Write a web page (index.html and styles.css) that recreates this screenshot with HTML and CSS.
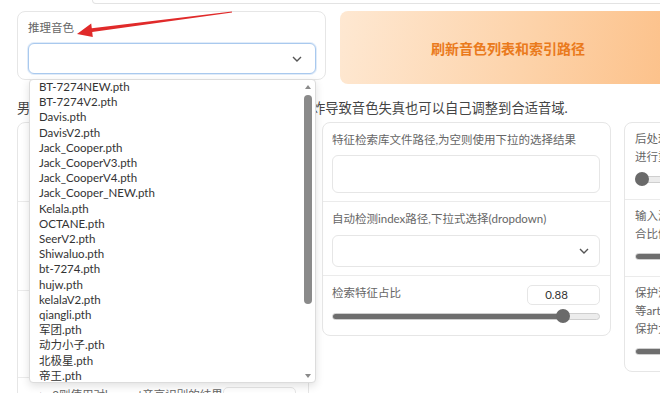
FILE: index.html
```html
<!DOCTYPE html>
<html lang="zh">

<head>
  <meta charset="UTF-8">
  <meta name="viewport" content="width=device-width, initial-scale=1.0">
  <title>模型推理</title>
  <link rel="stylesheet" href="styles.css">
</head>

<body>
  <div class="page">
    <div class="top-strip"></div>

    <div class="top-row">
      <div class="card voice-card">
        <div class="label">推理音色</div>
        <div class="select focused">
          <svg class="chev" width="10" height="6" viewBox="0 0 10 6"><polyline points="1,1 5,5 9,1" /></svg>
        </div>
      </div>
      <button class="refresh-btn">刷新音色列表和索引路径</button>
    </div>

    <p class="info">男转女推荐+12key, 女转男推荐-12key, 如果音域爆炸导致音色失真也可以自己调整到合适音域.</p>

    <div class="columns">
      <!-- left column -->
      <div class="card col-left">
        <div class="block">
          <div class="label">变调(整数, 半音数量, 升八度12降八度-12)</div>
          <div class="textbox"></div>
        </div>
        <div class="block">
          <div class="label">输入待处理音频文件路径(默认是正确格式示例)</div>
          <div class="textbox tall"></div>
        </div>
        <div class="block">
          <div class="label">选择音高提取算法,输入歌声可用pm提速,harvest低音好但巨慢无比,crepe效果好但吃GPU</div>
          <div class="radios">
            <span class="radio">pm</span>
            <span class="radio">harvest</span>
            <span class="radio">crepe</span>
            <span class="radio">rmvpe</span>
          </div>
        </div>
        <div class="block nested">
          <div class="head">
            <div class="label">&gt;=3则使用对harvest音高识别的结果使用中值滤波</div>
            <div class="num">3</div>
          </div>
        </div>
      </div>

      <!-- middle column -->
      <div class="card col-mid">
        <div class="block">
          <div class="label">特征检索库文件路径,为空则使用下拉的选择结果</div>
          <div class="textbox"></div>
        </div>
        <div class="block">
          <div class="label">自动检测index路径,下拉式选择(dropdown)</div>
          <div class="select">
            <svg class="chev" width="10" height="6" viewBox="0 0 10 6"><polyline points="1,1 5,5 9,1" /></svg>
          </div>
        </div>
        <div class="block">
          <div class="head">
            <div class="label">检索特征占比</div>
            <div class="num">0.88</div>
          </div>
          <div class="slider">
            <div class="track"><div class="fill" style="width: calc(7px + 0.88 * (100% - 14px))"></div></div>
            <div class="thumb" style="left: calc(0.88 * (100% - 14px))"></div>
          </div>
        </div>
      </div>

      <!-- right column -->
      <div class="card col-right">
        <div class="block">
          <div class="label">后处理重采样至最终采样率，0为不进行重采样</div>
          <div class="slider">
            <div class="track"><div class="fill" style="width: 7px"></div></div>
            <div class="thumb" style="left: 0"></div>
          </div>
        </div>
        <div class="block">
          <div class="label">输入源音量包络替换输出音量包络融合比例，越靠近1越使用输出包络</div>
          <div class="slider">
            <div class="track"><div class="fill" style="width: calc(7px + 1 * (100% - 14px))"></div></div>
            <div class="thumb" style="left: calc(1 * (100% - 14px))"></div>
          </div>
        </div>
        <div class="block">
          <div class="label">保护清辅音和呼吸声，防止电音撕裂等artifact，拉满0.5不开启，调低加大保护力度但可能降低索引效果</div>
          <div class="slider">
            <div class="track"><div class="fill" style="width: calc(7px + 0.66 * (100% - 14px))"></div></div>
            <div class="thumb" style="left: calc(0.66 * (100% - 14px))"></div>
          </div>
        </div>
      </div>
    </div>

    <!-- open dropdown of 推理音色 -->
    <div class="dropdown">
      <ul class="options">
        <li>BT-7274NEW.pth</li>
        <li>BT-7274V2.pth</li>
        <li>Davis.pth</li>
        <li>DavisV2.pth</li>
        <li>Jack_Cooper.pth</li>
        <li>Jack_CooperV3.pth</li>
        <li>Jack_CooperV4.pth</li>
        <li>Jack_Cooper_NEW.pth</li>
        <li>Kelala.pth</li>
        <li>OCTANE.pth</li>
        <li>SeerV2.pth</li>
        <li>Shiwaluo.pth</li>
        <li>bt-7274.pth</li>
        <li>hujw.pth</li>
        <li>kelalaV2.pth</li>
        <li>qiangli.pth</li>
        <li>军团.pth</li>
        <li>动力小子.pth</li>
        <li>北极星.pth</li>
        <li>帝王.pth</li>
      </ul>
      <div class="scrollbar">
        <span class="arrow-up"></span>
        <span class="scroll-thumb"></span>
        <span class="arrow-down"></span>
      </div>
    </div>

    <!-- red annotation arrow -->
    <svg class="annot" width="240" height="45" viewBox="0 0 240 45">
      <polygon points="77,34 91.2,23.5 91.8,28.2 231.9,11.4 232.1,12.6 92.2,32 92.8,37" />
    </svg>
  </div>
</body>

</html>
```

FILE: styles.css
```css
* {
  box-sizing: border-box;
}

body {
  margin: 0;
  font-family: Lato, "Noto Sans CJK SC", sans-serif;
  color: #444;
  background-color: #fff;
  overflow: hidden;
}

.page {
  position: relative;
  width: 660px;
  height: 393px;
  overflow: hidden;
}

.top-strip {
  margin-left: 92px;
  width: 600px;
  height: 4px;
  border: 1px solid #e3e3e3;
  border-top: none;
  border-radius: 0 0 0 6px;
}

.top-row {
  display: flex;
  align-items: flex-start;
  gap: 14px;
  padding: 7px 0 0 17px;
}

.card {
  flex: none;
  background-color: #fff;
  border: 1px solid #e6e6e6;
  border-radius: 8px;
}

.label {
  font-size: 11.5px;
  line-height: 18px;
  color: #666;
}

.voice-card {
  width: 309px;
  padding: 8px 9px 5px 10px;
}

.voice-card .label {
  line-height: 16px;
  margin-bottom: 7px;
}

.select {
  display: flex;
  align-items: center;
  justify-content: flex-end;
  height: 32px;
  padding-right: 10px;
  border: 1px solid #e6e6e6;
  border-radius: 6px;
  background-color: #fff;
}

.select.focused {
  height: 31px;
  padding-right: 13px;
  border-color: #a9c9ee;
  box-shadow: 0 0 0 1px rgba(169, 201, 238, 0.35);
}

.chev polyline {
  fill: none;
  stroke: #555;
  stroke-width: 1.4;
}

.refresh-btn {
  flex: none;
  width: 336px;
  height: 73px;
  border: none;
  border-radius: 8px;
  background: linear-gradient(100deg, #fee8d2 0%, #fdd3aa 55%, #fcc088 100%);
  color: #ea7a1c;
  font-family: "Noto Sans CJK SC", sans-serif;
  font-size: 14px;
  font-weight: bold;
  cursor: pointer;
}

.info {
  margin: 14px 0 0 17px;
  font-size: 13.3px;
  line-height: 20px;
  white-space: nowrap;
  color: #444;
}

.columns {
  display: flex;
  align-items: flex-start;
  gap: 13px;
  margin-top: 4px;
  padding-left: 17px;
}

.col-left {
  width: 292px;
}

.col-mid {
  width: 289px;
}

.col-right {
  width: 212.5px;
}

.block {
  padding: 8px 10px 8px 9px;
  border-bottom: 1px solid #ebebeb;
}

.block:last-child {
  border-bottom: none;
}

.block .label {
  margin-bottom: 6px;
}

.block .label + .select {
  margin-top: 7px;
}

.col-left .block {
  padding-left: 14px;
  padding-right: 14px;
}

.textbox {
  height: 38px;
  border: 1px solid #e6e6e6;
  border-radius: 6px;
}

.textbox.tall {
  height: 48px;
}

.radios {
  display: flex;
  gap: 10px;
  height: 28px;
  align-items: center;
  font-size: 11.5px;
}

.col-left .nested {
  padding-left: 21px;
  padding-right: 12px;
}

.head {
  display: flex;
  justify-content: space-between;
  align-items: flex-start;
}

.head .label {
  margin-bottom: 0;
}

.num {
  flex: none;
  width: 73px;
  height: 20px;
  margin-top: 1px;
  padding-right: 14px;
  border: 1px solid #e6e6e6;
  border-radius: 5px;
  font-size: 11.5px;
  line-height: 18px;
  text-align: center;
  color: #333;
}

.slider {
  position: relative;
  height: 14px;
  margin-top: 4px;
}

.track {
  position: relative;
  top: 3.5px;
  height: 7px;
  border: 1px solid #cfcfcf;
  border-radius: 4px;
  background-color: #ececec;
  overflow: hidden;
}

.fill {
  height: 100%;
  background-color: #6e6e6e;
}

.thumb {
  position: absolute;
  top: 0;
  width: 14px;
  height: 14px;
  border-radius: 50%;
  background-color: #6a6a6a;
}

.col-mid .block:last-child {
  padding-bottom: 12px;
}

.col-right .block {
  padding: 7px 10px 13px 10px;
}

.col-right .block .label {
  margin-bottom: 6px;
}

.col-right .slider {
  margin-top: 0;
}

.dropdown {
  position: absolute;
  left: 29px;
  top: 79px;
  width: 287px;
  height: 304px;
  display: flex;
  background-color: #fff;
  border: 1px solid #dcdcdc;
  border-radius: 4px;
  box-shadow: 0 3px 8px rgba(0, 0, 0, 0.12);
}

.options {
  flex: 1;
  margin: -1px 0 0;
  padding: 0 0 0 9px;
  list-style: none;
  font-size: 11.5px;
  line-height: 15.2px;
  color: #333;
  overflow: hidden;
}

.scrollbar {
  width: 15px;
  display: flex;
  flex-direction: column;
  align-items: center;
  padding: 5px 0 4px;
}

.arrow-up {
  width: 0;
  height: 0;
  border-left: 3.5px solid transparent;
  border-right: 3.5px solid transparent;
  border-bottom: 4px solid #8a8a8a;
}

.arrow-down {
  margin-top: auto;
  width: 0;
  height: 0;
  border-left: 3.5px solid transparent;
  border-right: 3.5px solid transparent;
  border-top: 4px solid #8a8a8a;
}

.scroll-thumb {
  margin-top: 6px;
  width: 8px;
  height: 209px;
  border-radius: 4px;
  background-color: #8a8a8a;
}

.annot {
  position: absolute;
  left: 0;
  top: 0;
}

.annot polygon {
  fill: #e02a2a;
}
```
